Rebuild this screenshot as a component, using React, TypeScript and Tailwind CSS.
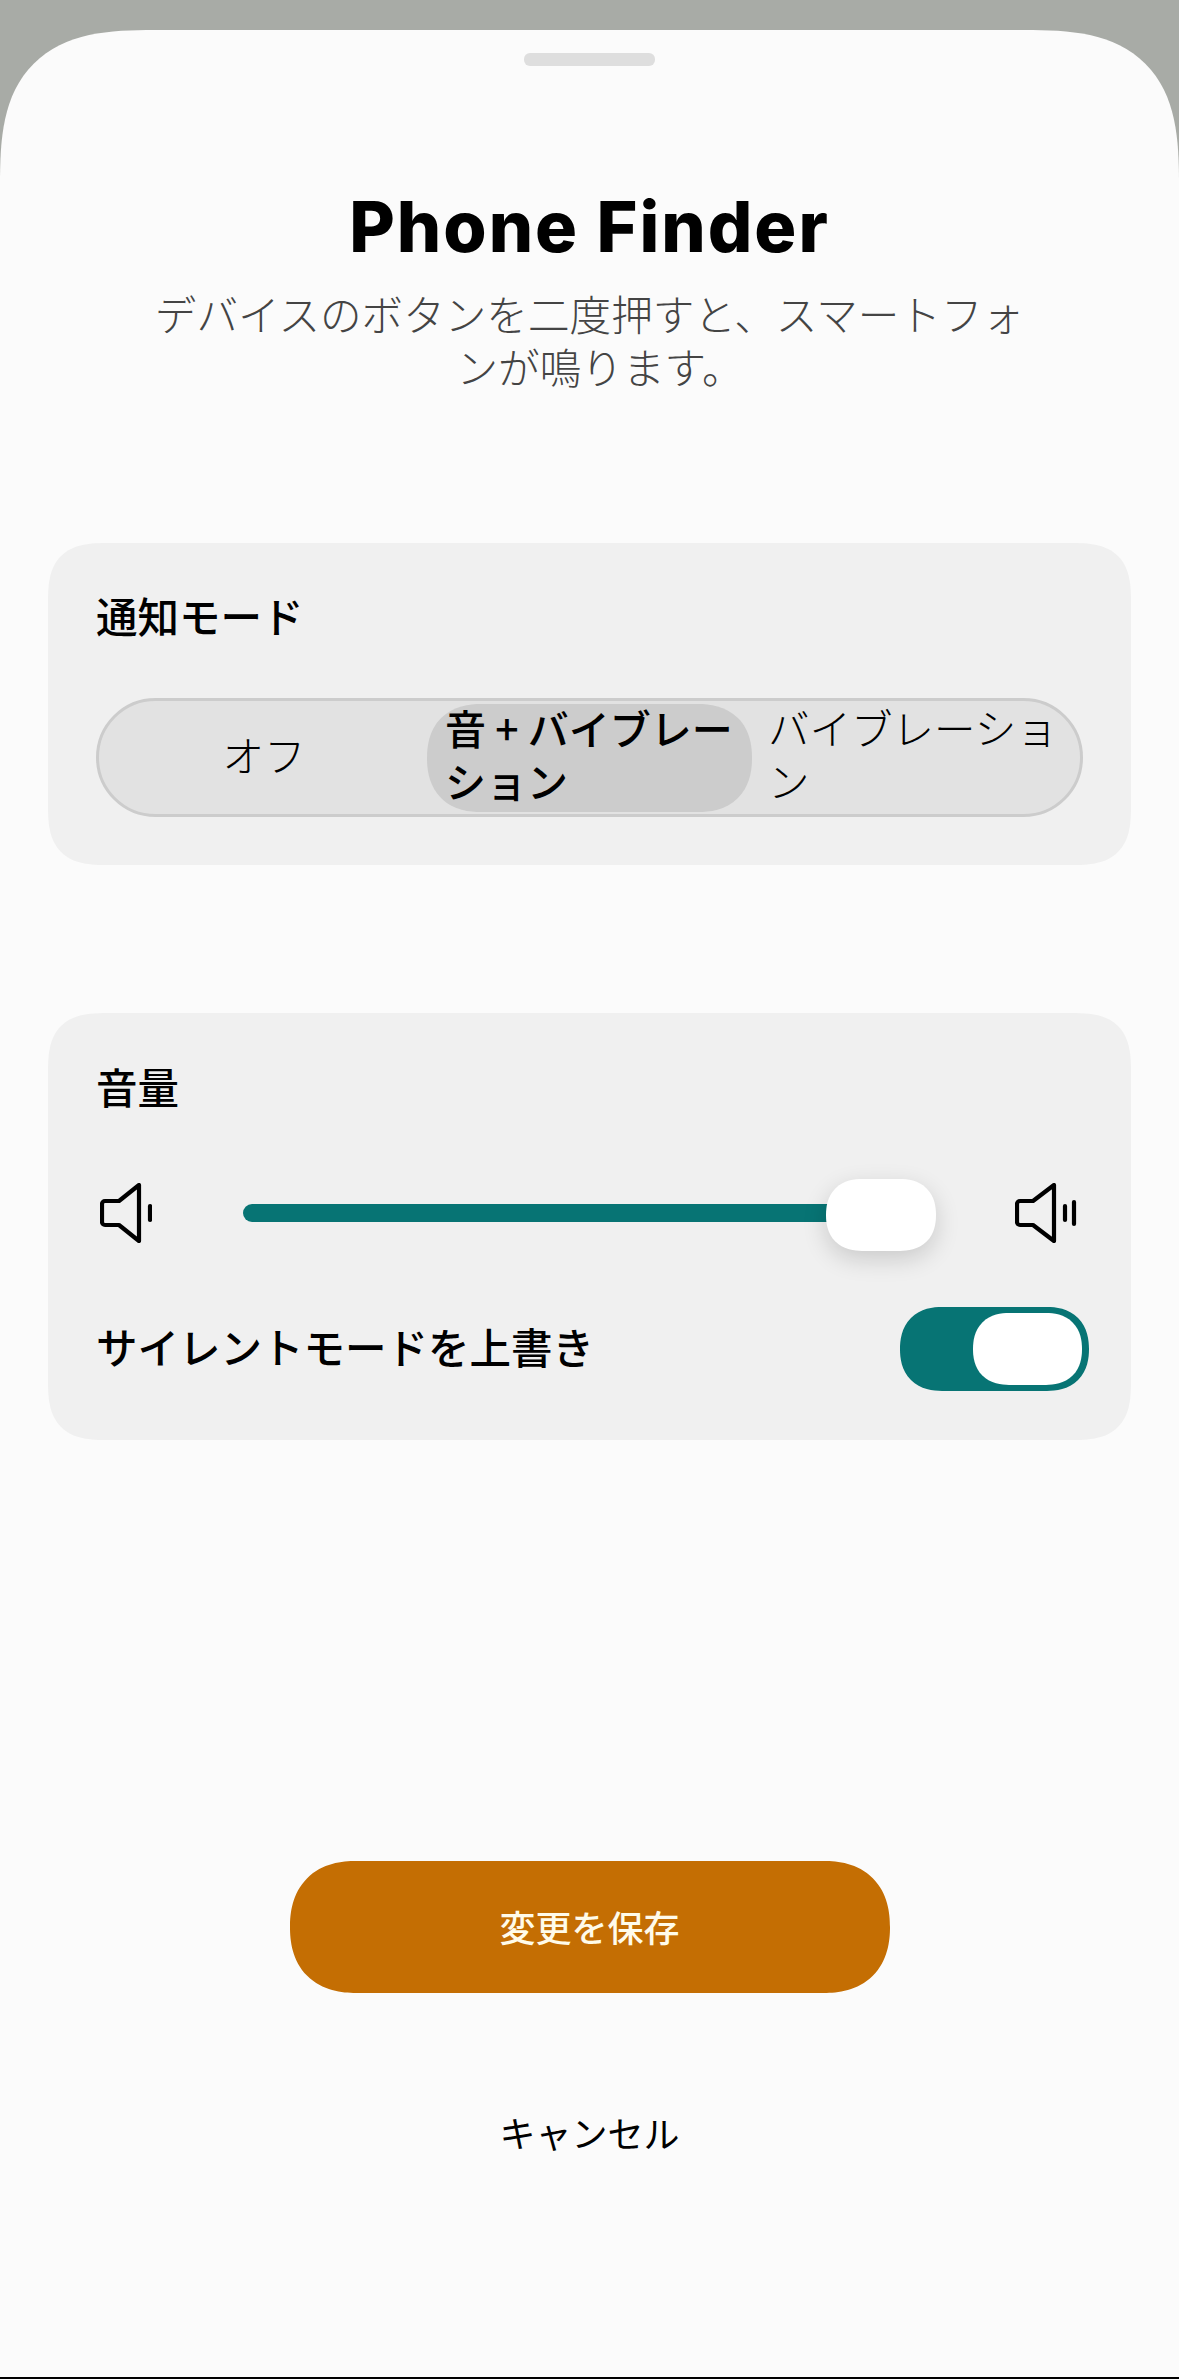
export default function App() {
    return (
        <div className="flex h-[2379px] flex-col bg-[#a8aba6] pt-[30px] font-['Noto_Sans_CJK_JP','Noto_Sans',sans-serif] text-black">
            <div className="flex flex-1 flex-col items-center rounded-t-[155px] bg-[#fbfbfb] [corner-shape:superellipse(1.5)]">
                <div className="mt-[23px] h-[13px] w-[131px] rounded-[6px] bg-[#dedede]"/>
                <h1 className="mt-[121px] font-['Inter',sans-serif] text-[70px] leading-[80px] font-extrabold tracking-[2px]">Phone Finder</h1>
                <p className="mt-[20px] w-[900px] text-center text-[41.6px] leading-[53px] font-light text-[#444]">
                    <span className="block">デバイスのボタンを二度押すと、スマートフォ</span>
                    <span className="block pl-[21px]">ンが鳴ります。</span>
                </p>

                <section className="mt-[150px] w-[1083px] rounded-[60px] bg-[#f0f0f0] px-[48px] pt-[44px] pb-[48px] [corner-shape:superellipse(1.5)]">
                    <h2 className="text-[41.5px] leading-[56px] font-medium">通知モード</h2>
                    <div className="mt-[55px] flex h-[119px] items-center rounded-full border-[3px] border-[#cccccc] bg-[#e2e2e2] px-[2px]">
                        <div className="flex h-[108px] w-[326px] items-center justify-center px-[18px] pb-[6px] text-[41.5px] leading-[53px] font-light">オフ</div>
                        <div className="flex h-[108px] w-[325px] items-center justify-center rounded-full bg-[#cccccc] px-[18px] pb-[7px] text-[41px] leading-[53px] font-medium [corner-shape:superellipse(1.2)]">音 + バイブレーション</div>
                        <div className="flex h-[108px] w-[326px] items-center justify-center px-[16px] pb-[7px] text-[41.5px] leading-[53px] font-light">バイブレーション</div>
                    </div>
                </section>

                <section className="mt-[148px] w-[1083px] rounded-[60px] bg-[#f0f0f0] px-[48px] pt-[45px] pb-[49px] [corner-shape:superellipse(1.5)]">
                    <h2 className="text-[41.5px] leading-[56px] font-medium">音量</h2>
                    <div className="mt-[63px] flex h-[72px] items-center">
                        <svg className="ml-[4px] shrink-0" width="52" height="60" viewBox="20 24 52 60" fill="none" stroke="#000" strokeWidth="4.2" strokeLinecap="round" strokeLinejoin="round">
                            <path d="M39 42H25a3 3 0 0 0-3 3v18a3 3 0 0 0 3 3h14l20 16V26z"/>
                            <path d="M70 47v14"/>
                        </svg>
                        <div className="relative ml-[91px] h-[18px] flex-1">
                            <div className="h-full w-[92%] rounded-l-full bg-[#077474]"/>
                            <div className="absolute top-[-25px] right-0 h-[72px] w-[110px] rounded-full bg-white shadow-[0_8px_24px_rgba(0,0,0,0.16)] [corner-shape:superellipse(1.2)]"/>
                        </div>
                        <svg className="mr-[6px] ml-[79px] shrink-0" width="62" height="60" viewBox="25 24 62 60" fill="none" stroke="#000" strokeWidth="4.2" strokeLinecap="round" strokeLinejoin="round">
                            <path d="M43 42H30a3 3 0 0 0-3 3v18a3 3 0 0 0 3 3h13l21 16V26z"/>
                            <path d="M75 47v14"/>
                            <path d="M84 43v22"/>
                        </svg>
                    </div>
                    <div className="mt-[58px] -mr-[6px] flex h-[84px] items-center justify-between">
                        <span className="pb-[6px] text-[41.5px] leading-[56px] font-medium">サイレントモードを上書き</span>
                        <div className="flex h-[84px] w-[189px] items-center justify-end rounded-full bg-[#077474] pr-[7px] [corner-shape:superellipse(1.2)]">
                            <div className="h-[72px] w-[109px] rounded-full bg-white [corner-shape:superellipse(1.2)]"/>
                        </div>
                    </div>
                </section>

                <button className="mt-[421px] h-[132px] w-[600px] rounded-full bg-[#c46e03] pb-[3px] text-[36px] font-medium text-[#fffbea] [corner-shape:superellipse(1.2)]">変更を保存</button>
                <button className="mt-[113px] text-[36px] leading-[52px]">キャンセル</button>

                <div className="mt-auto h-[2px] w-full bg-black"/>
            </div>
        </div>
    );
}
